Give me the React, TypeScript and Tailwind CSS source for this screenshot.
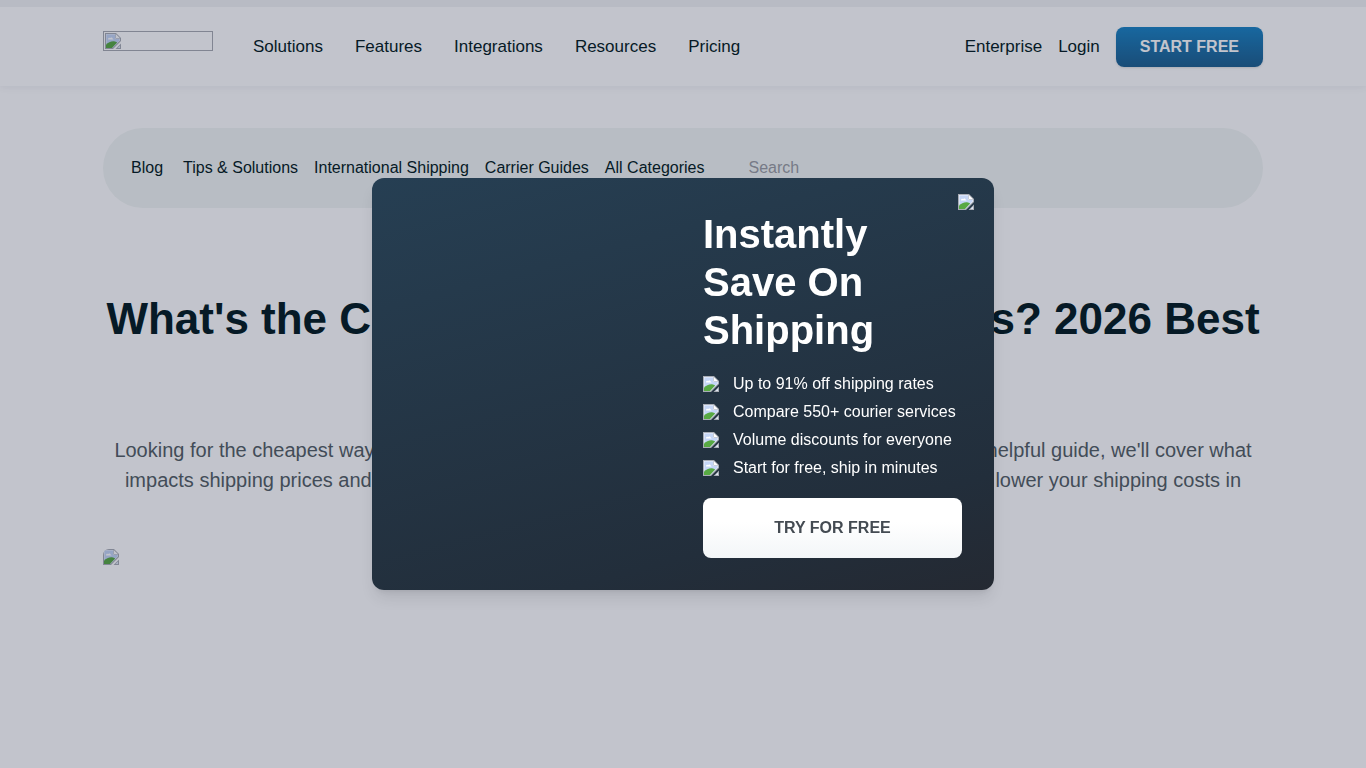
const navLinks = ["Solutions", "Features", "Integrations", "Resources", "Pricing"];

const categories = [
  "Tips & Solutions",
  "International Shipping",
  "Carrier Guides",
  "All Categories",
];

const perks = [
  "Up to 91% off shipping rates",
  "Compare 550+ courier services",
  "Volume discounts for everyone",
  "Start for free, ship in minutes",
];

function ImageIcon({ className = "" }: { className?: string }) {
  return (
    <svg viewBox="0 0 16 16" className={`size-4 shrink-0 ${className}`} aria-hidden="true">
      <path d="M0 0h11l5 5v3L8 16H0z" fill="#a9adb5" />
      <path d="M1 1h9.5v4.5H15v2L7.5 15H1z" fill="#eaf0fc" />
      <path d="M1.5 1.5h8.5v4.5h4.5v1.3L7 15H1.5z" fill="#c5d6f6" />
      <path d="M3 6.5C2.8 5 4.4 4.4 5 5.2 5.7 3.8 8 4.4 7.8 6c.9 0 .8.6.3.5z" fill="#fff" />
      <path d="M1 15v-3.2C3 9.4 6 8 9 8.2c1.3 .1 2.3.5 3.2 1.3L7 15z" fill="#58a943" />
      <path d="M11 1.2 14.8 5H11z" fill="#fff" />
      <path d="M16 10.5V16h-5.5z" fill="#a9adb5" />
      <path d="M15 12.5V15h-2.5z" fill="#dfe8f6" />
    </svg>
  );
}

function Header() {
  return (
    <header className="border-t-7 border-[#f2f3f4] bg-white shadow-[0_1px_8px_rgba(20,30,60,0.07)]">
      <div className="mx-auto flex h-[79px] max-w-[1160px] items-center">
        <a
          href="#"
          aria-label="Home"
          className="mr-10 mb-3 flex h-5 w-[110px] items-center border border-[#a9abb2] pl-px"
        >
          <ImageIcon />
        </a>
        <nav className="flex flex-1 gap-8">
          {navLinks.map((link) => (
            <a key={link} href="#" className="text-[17px]">
              {link}
            </a>
          ))}
        </nav>
        <div className="flex items-center gap-4">
          <a href="#" className="text-[17px]">Enterprise</a>
          <a href="#" className="text-[17px]">Login</a>
          <button
            type="button"
            className="h-10 rounded-lg bg-linear-to-b from-[#1b84c4] to-[#1e608f] px-6 font-bold text-white shadow-sm"
          >
            START FREE
          </button>
        </div>
      </div>
    </header>
  );
}

function CategoryBar() {
  return (
    <div className="flex h-20 items-center rounded-full bg-[#f2f6f4] px-7">
      <a href="#" className="mr-5">Blog</a>
      <nav className="flex gap-4">
        {categories.map((category) => (
          <a key={category} href="#">
            {category}
          </a>
        ))}
      </nav>
      <input
        type="search"
        aria-label="Search"
        placeholder="Search"
        className="ml-11 min-w-0 flex-1 bg-transparent outline-none placeholder:text-[#9a9da3]"
      />
    </div>
  );
}

function SavingsDialog() {
  return (
    <div className="fixed inset-0 flex items-center justify-center bg-[rgba(10,20,50,0.25)]">
      <div
        role="dialog"
        aria-labelledby="savings-title"
        className="relative grid w-full max-w-[622px] grid-cols-2 rounded-xl bg-linear-165 from-[#263f53] via-[#222e3b] via-80% to-[#242932] text-white shadow-lg"
      >
        <button type="button" aria-label="Close" className="absolute top-4 right-5">
          <ImageIcon />
        </button>
        <div className="col-start-2 py-8 pr-8 pl-5">
          <h2 id="savings-title" className="text-[40px] leading-[48px] font-bold">
            Instantly
            <br />
            Save On
            <br />
            Shipping
          </h2>
          <ul className="my-4">
            {perks.map((perk) => (
              <li key={perk} className="flex items-center gap-[14px] leading-7 whitespace-nowrap">
                <ImageIcon />
                {perk}
              </li>
            ))}
          </ul>
          <button
            type="button"
            className="h-[60px] w-full rounded-lg bg-linear-to-b from-white from-40% to-[#f3f6f8] font-bold text-[#444b52]"
          >
            TRY FOR FREE
          </button>
        </div>
      </div>
    </div>
  );
}

export default function App() {
  return (
    <div className="min-h-screen bg-white font-['Liberation_Sans',Arial,sans-serif] text-base text-[#051c22]">
      <Header />
      <main className="mx-auto max-w-[1160px] pt-[42px]">
        <CategoryBar />
        <article>
          <h1 className="mt-20 text-center text-[44px] leading-[62px] font-bold">
            What's the Cheapest Way to Ship Packages? 2026 Best Rates
          </h1>
          <p className="mt-[23px] mb-6 text-center text-xl leading-[30px] text-[#555f65]">
            Looking for the cheapest way to ship your packages online? You've come to the right
            place. In this helpful guide, we'll cover what impacts shipping prices and compare the
            top courier options, along with our tips on how to quickly lower your shipping costs in
            2026.
          </p>
          <ImageIcon className="rounded-tl-md" />
        </article>
      </main>
      <SavingsDialog />
    </div>
  );
}
